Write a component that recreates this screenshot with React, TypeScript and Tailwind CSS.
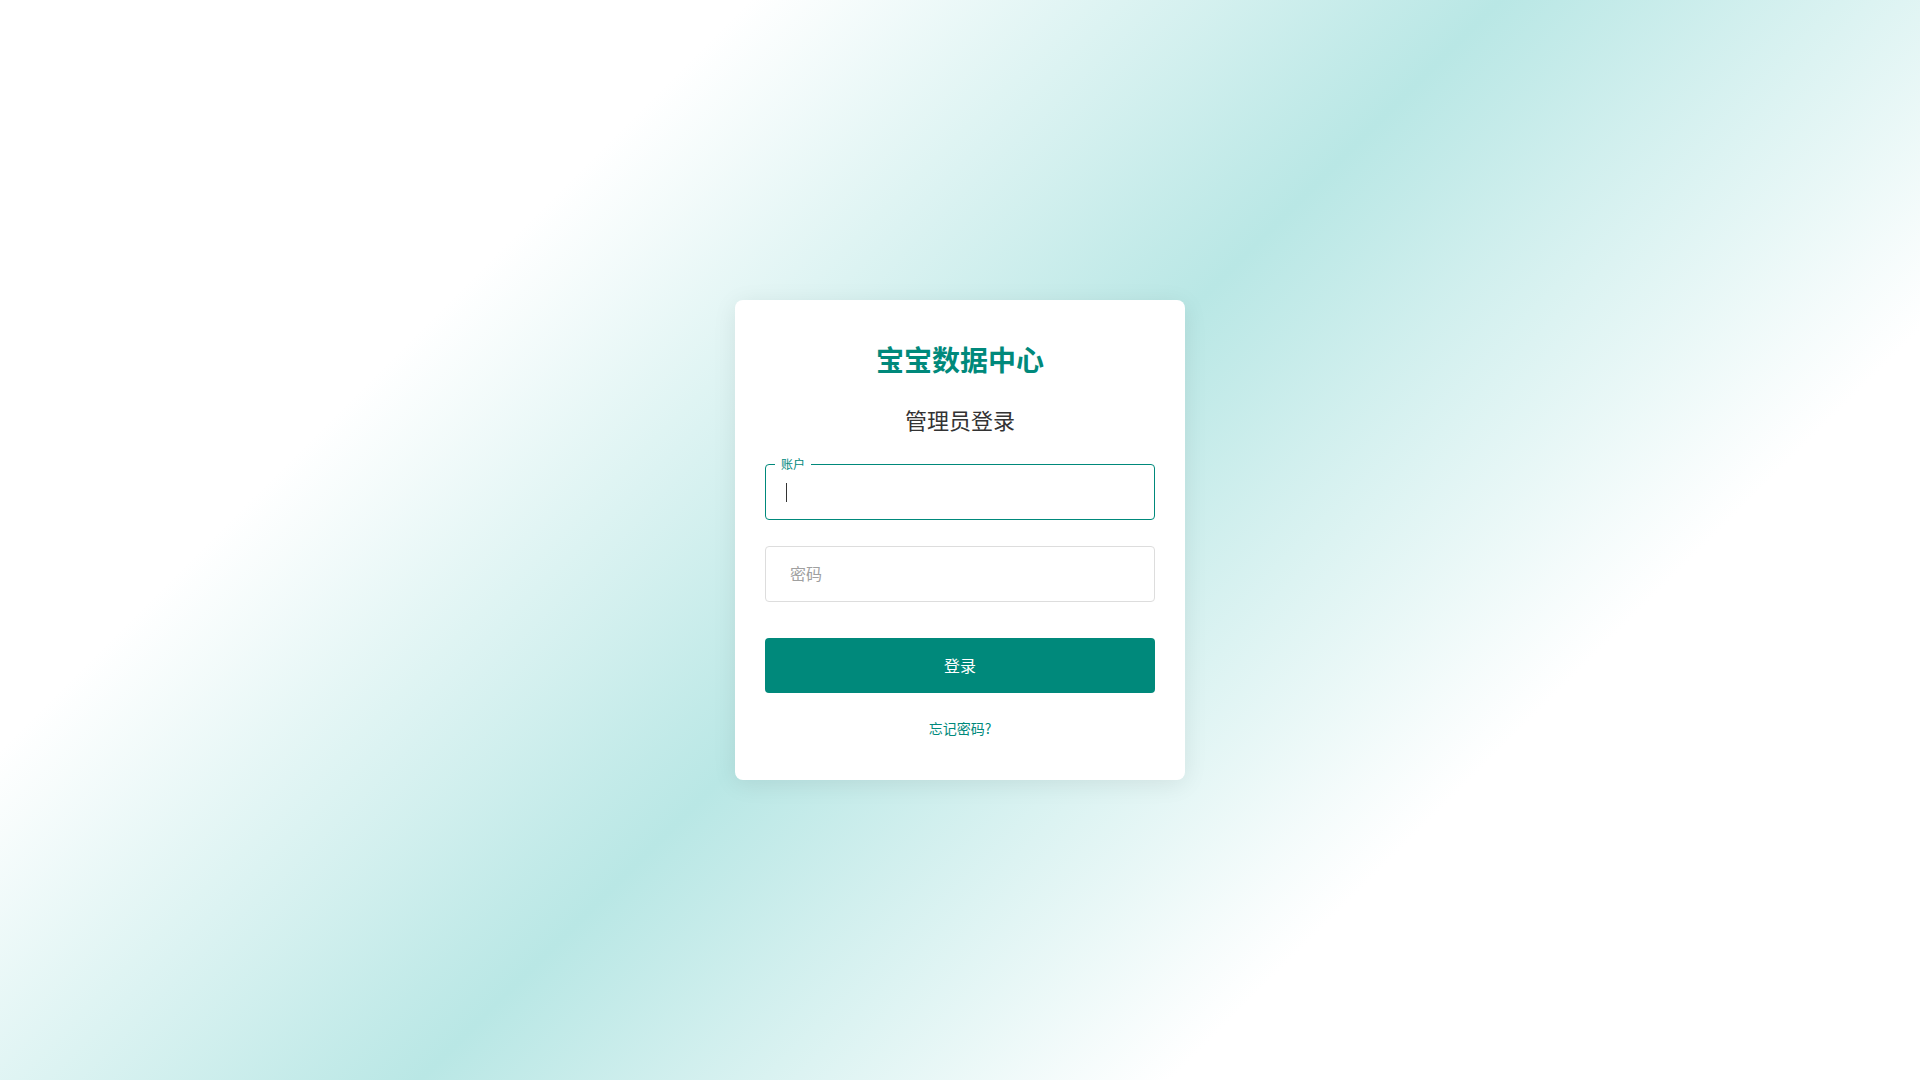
import React from "react";

// Admin login — single centred card on a diagonal teal wash.
const font = { fontFamily: '"Noto Sans CJK SC", "Noto Sans", sans-serif' };

export default function App() {
  return (
    <div
      className="flex min-h-screen w-full items-center justify-center bg-[linear-gradient(135deg,#ffffff_25%,#b9e7e5_50%,#ffffff_75%)]"
      style={font}
    >
      <div className="flex w-[450px] flex-col rounded-lg bg-white px-[30px] pt-[41px] pb-[42px] shadow-[0_4px_24px_rgba(0,0,0,0.08)]">
        <h1 className="text-center text-[28px] font-bold leading-[36px] text-[#00897b]">宝宝数据中心</h1>
        <h2 className="mt-[27px] text-center text-[22px] font-normal leading-[30px] text-[#333333]">管理员登录</h2>

        {/* Account field, shown focused: notched outline with floating label */}
        <div className="relative mt-[30px] h-[56px]">
          <input
            aria-label="账户"
            className="h-full w-full rounded border border-[#00897b] bg-white pl-[21px] text-base text-[#333] outline-none"
          />
          <span className="absolute -top-[9px] left-[10px] bg-white px-[6px] text-[12px] leading-[18px] text-[#00897b]">账户</span>
          <span className="pointer-events-none absolute top-[19px] left-[21px] h-[19px] w-px bg-[#333]" />
        </div>

        <input
          placeholder="密码"
          type="password"
          className="mt-[26px] h-[56px] w-full rounded border border-[#dddddd] bg-white pl-[24px] pb-[2px] text-base text-[#333] outline-none placeholder:text-[#a0a0a0]"
        />

        <button className="mt-[36px] h-[55px] w-full rounded bg-[#00897b] pb-[2px] text-base text-white">登录</button>

        <a href="#" className="mt-[25px] text-center text-[14px] leading-[20px] text-[#00897b]">
          忘记密码?
        </a>
      </div>
    </div>
  );
}
